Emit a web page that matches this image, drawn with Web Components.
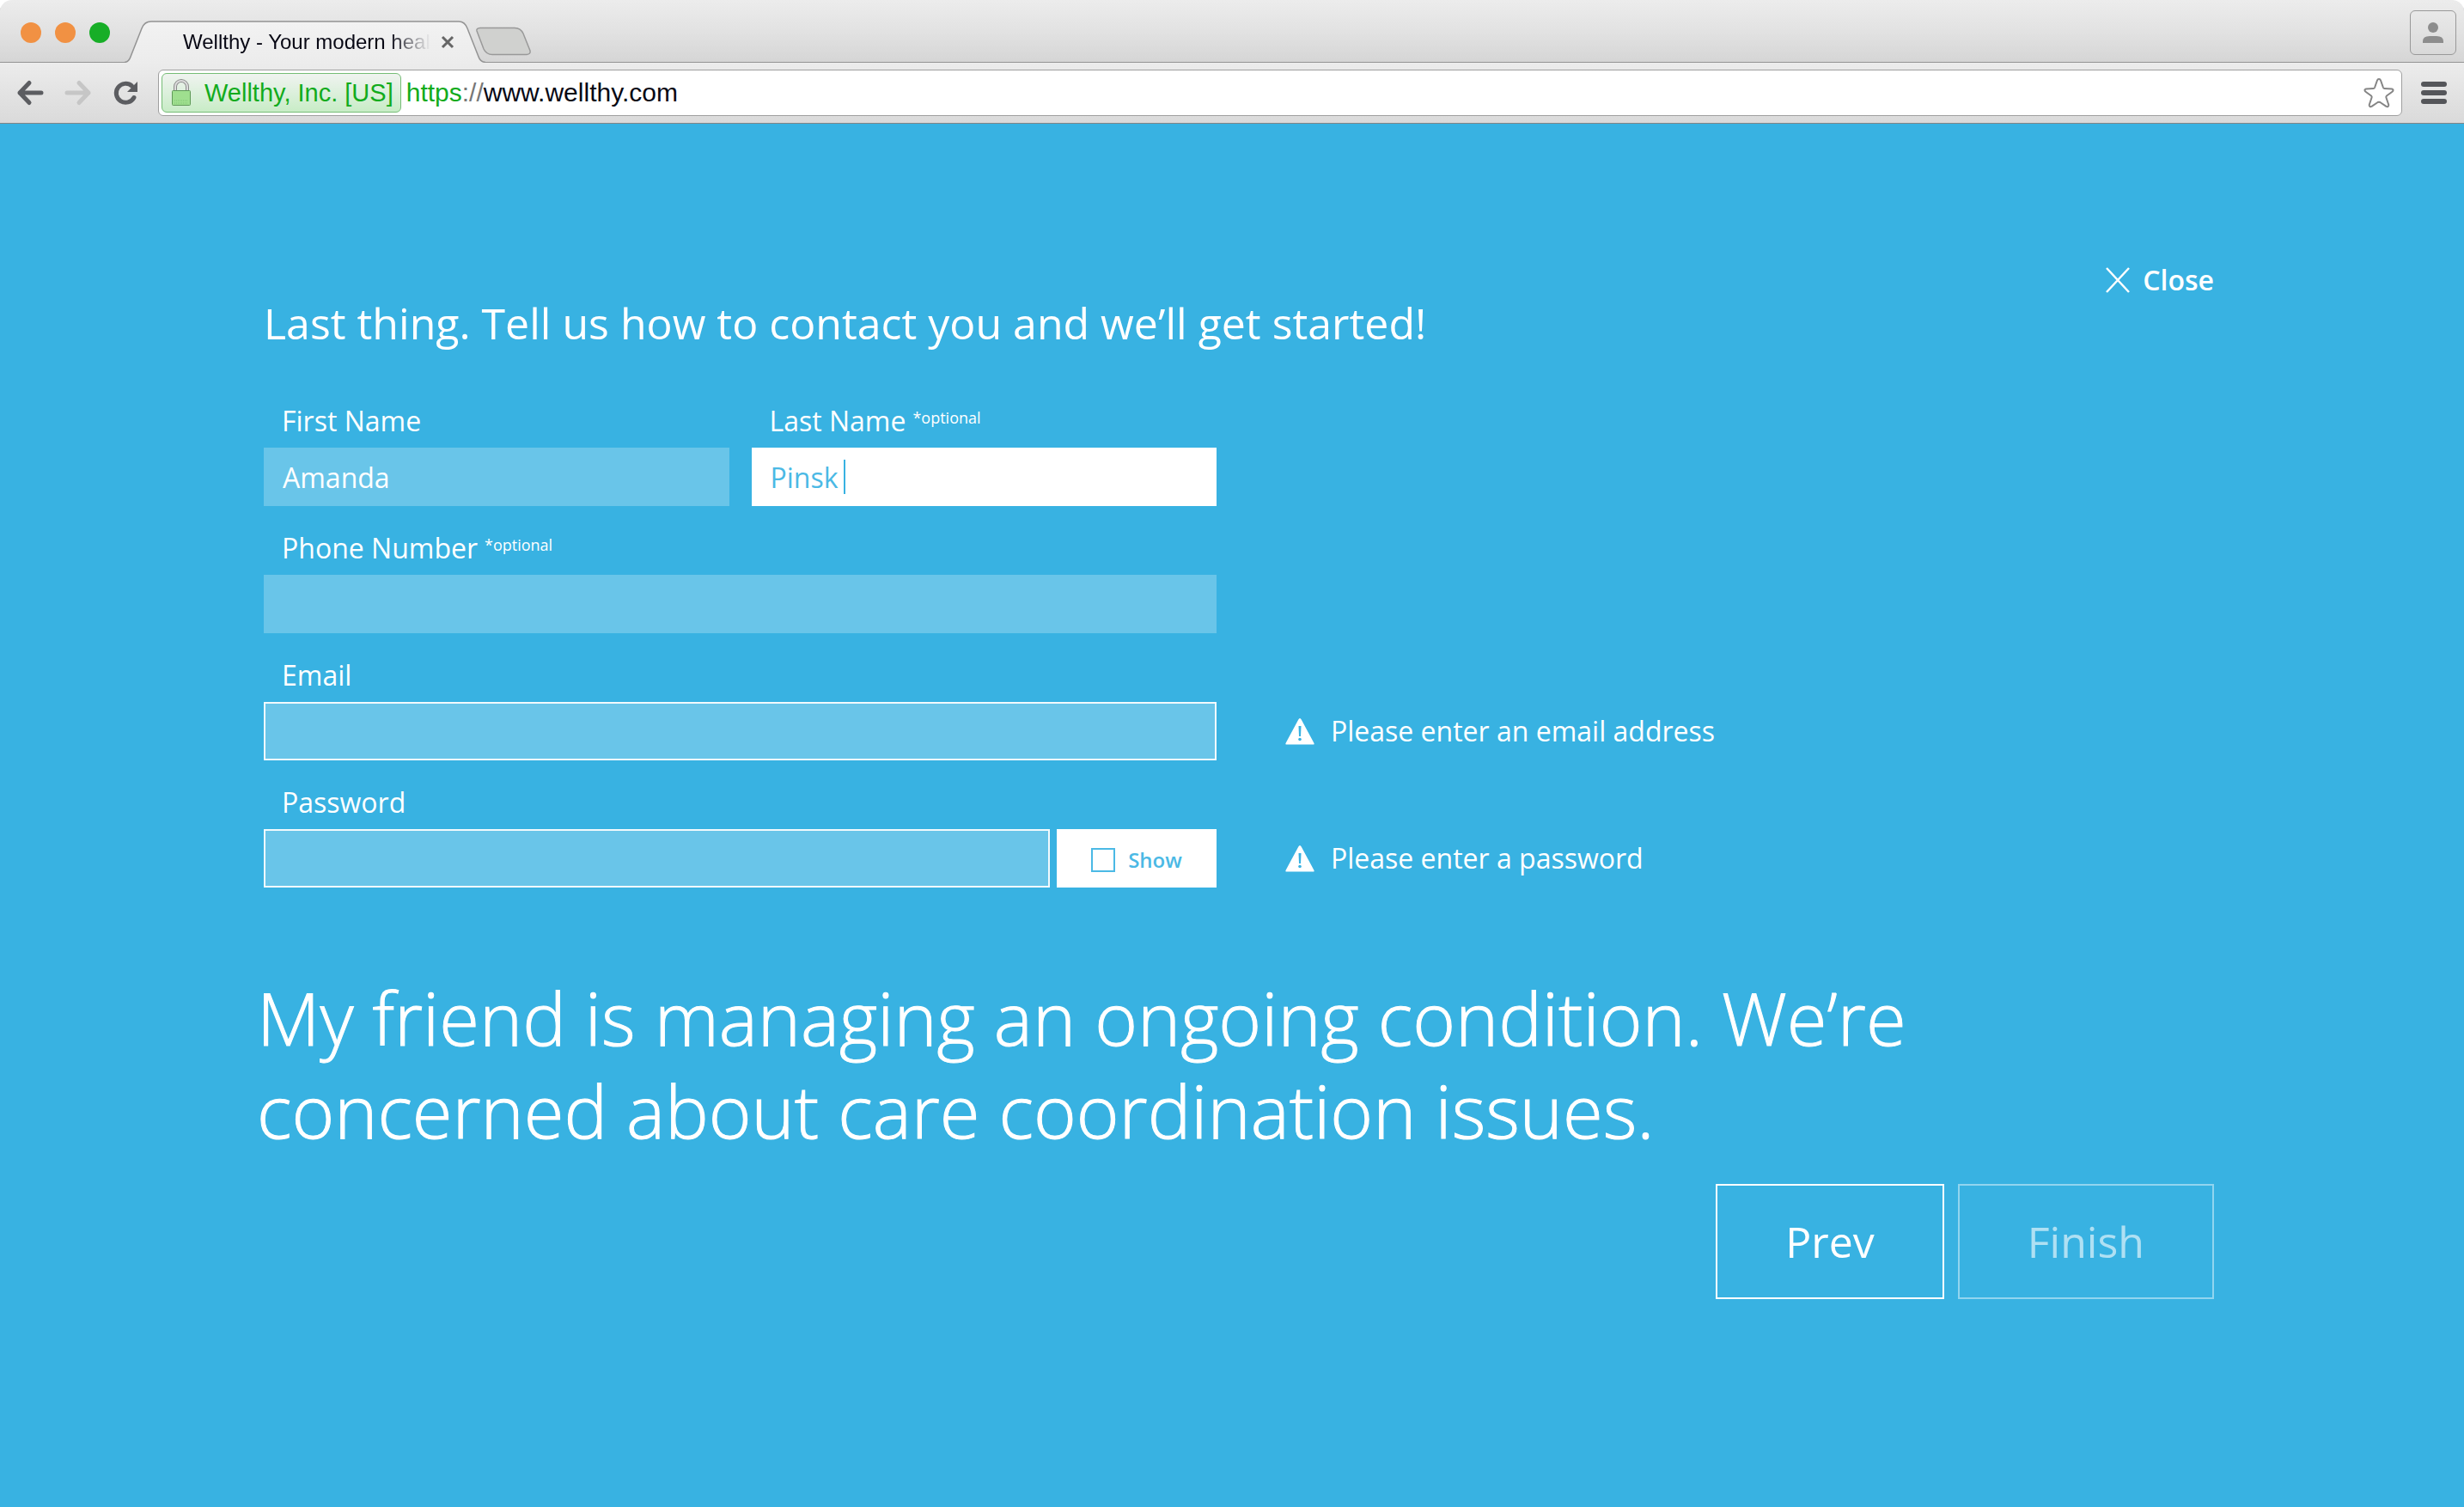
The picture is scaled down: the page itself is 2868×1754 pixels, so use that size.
<!DOCTYPE html>
<html lang="en">
<head>
<meta charset="utf-8">
<title>Wellthy - Your modern health care</title>
<style>
  html, body { margin: 0; }
  body { min-height: 100vh; background: #fff; font-family: "Open Sans", "Noto Sans", sans-serif; }
</style>
</head>
<body>
<browser-window>
  <browser-tab slot="tabs">Wellthy - Your modern health care</browser-tab>
  <address-bar slot="address" owner="Wellthy, Inc. [US]" scheme="https" host="www.wellthy.com"></address-bar>
  <contact-page></contact-page>
</browser-window>

<script>
function define(name, html, setup) {
  const template = document.createElement('template');
  template.innerHTML = html;
  customElements.define(name, class extends HTMLElement {
    constructor() {
      super();
      this.attachShadow({ mode: 'open' }).append(template.content.cloneNode(true));
    }
    connectedCallback() {
      if (setup) setup(this, this.shadowRoot);
    }
  });
}

define('browser-tab', `
<style>
  :host { display: grid; width: 420px; height: 49px; font-family: "Liberation Sans", Arial, sans-serif; }
  .shape, .body { grid-area: 1 / 1; }
  .body { display: flex; align-items: center; padding: 0 36px 0 68px; gap: 12px; min-width: 0; }
  .title { flex: 1; min-width: 0; overflow: hidden; white-space: nowrap; font-size: 24px; line-height: 30px; color: #080814;
    -webkit-mask-image: linear-gradient(90deg, #000 83%, transparent 100%); mask-image: linear-gradient(90deg, #000 83%, transparent 100%); }
  button { all: unset; display: flex; }
</style>
<svg class="shape" width="420" height="49" viewBox="0 0 420 49" aria-hidden="true">
  <defs><linearGradient id="g" x1="0" y1="0" x2="0" y2="1"><stop offset="0" stop-color="#f2f2f2"/><stop offset="1" stop-color="#ececec"/></linearGradient></defs>
  <path d="M0 49 Q5 48 7 42 L20 9 Q23 1 31 1 H389 Q396 1 399 9 L412 42 Q414 48 420 49 Z" fill="url(#g)"/>
  <path d="M0 48.5 Q5 48 7 42 L20 9 Q23 1 31 1 H389 Q396 1 399 9 L412 42 Q414 48 420 48.5" fill="none" stroke="#939393" stroke-width="1.5"/>
</svg>
<div class="body">
  <span class="title"><slot></slot></span>
  <button aria-label="Close tab"><svg width="16" height="16" viewBox="0 0 16 16"><path d="M2 2 L14 14 M14 2 L2 14" stroke="#666" stroke-width="3"/></svg></button>
</div>`);

define('address-bar', `
<style>
  :host { display: flex; align-items: center; box-sizing: border-box; height: 54px; padding: 0 8px 0 3px; background: #fff;
    border: 1px solid #9f9f9f; border-radius: 6px; font-family: "Liberation Sans", Arial, sans-serif; font-size: 30px; line-height: 40px; }
  button { all: unset; box-sizing: border-box; display: flex; align-items: center; }
  .owner { height: 46px; padding: 0 8px 0 10px; gap: 15px; color: #12ab1c; font-size: 29px; white-space: nowrap;
    border: 1px solid #76bd76; border-radius: 6px; background: linear-gradient(#f0f3f0, #dcf0dc 50%, #c8ecc6); }
  .url { flex: 1; padding-left: 6px; outline: none; white-space: nowrap; color: #080814; }
  .scheme { color: #12ab1c; }
  .sep { color: #777; }
</style>
<button class="owner">
  <svg width="24" height="32" viewBox="0 0 24 32" aria-hidden="true">
    <path d="M5 14 V9 a7 7 0 0 1 14 0 V14" fill="none" stroke="#8b8b8b" stroke-width="4"/>
    <path d="M5 14 V9 a7 7 0 0 1 14 0 V14" fill="none" stroke="#dcdcdc" stroke-width="2"/>
    <rect x="1.500" y="13.500" width="21" height="17" rx="1" fill="#9fdf8f" stroke="#5f9a58"/>
    <path d="M4 25 H20 M4 28 H20" stroke="#7fc573" stroke-width="1" stroke-dasharray="1 1"/>
  </svg>
  <span class="name"></span>
</button>
<div class="url" role="textbox" aria-label="Address" contenteditable="true" spellcheck="false"><span class="scheme"></span><span class="sep">://</span><span class="host"></span></div>
<button aria-label="Bookmark this page">
  <svg width="36" height="36" viewBox="0 0 36 36"><path d="M18 2 Q19.500 2 20 3.500 L23 12 Q23.400 13 24.500 13 L33 13.500 Q34.800 14 34.500 15 Q34.500 16 33.500 16.700 L27 21.500 Q26 22.300 26.400 23.500 L29.300 32 Q29.500 33.500 28.500 34 Q27.500 34.500 26.500 33.800 L19.300 29 Q18 28.300 16.700 29 L9.500 33.800 Q8.500 34.500 7.500 34 Q6.500 33.500 6.700 32 L9.600 23.500 Q10 22.300 9 21.500 L2.500 16.700 Q1.500 16 1.500 15 Q1.200 14 3 13.500 L11.500 13 Q12.600 13 13 12 L16 3.500 Q16.500 2 18 2 Z" fill="#fff" stroke="#858585" stroke-width="2" stroke-linejoin="round"/></svg>
</button>`, (host, root) => {
  root.querySelector('.name').textContent = host.getAttribute('owner');
  root.querySelector('.scheme').textContent = host.getAttribute('scheme');
  root.querySelector('.host').textContent = host.getAttribute('host');
});

define('browser-window', `
<style>
  :host { display: flex; flex-direction: column; min-height: 100vh; }
  button { all: unset; display: flex; }
  .strip { display: flex; align-items: flex-end; height: 73px; background: linear-gradient(#ececec, #e2e2e2 50%, #d5d5d5); border-radius: 14px 14px 0 0;
    box-shadow: inset 0 -1px #939393; }
  .lights { display: flex; gap: 16px; padding: 0 17px 23px 24px; }
  .lights button { width: 24px; height: 24px; border-radius: 50%; background: #f19143; }
  .lights .zoom { background: #17ae27; }
  .new { padding-bottom: 8px; margin-left: -12px; }
  .profile { box-sizing: border-box; width: 54px; height: 52px; margin: 0 9px 9px auto; border: 1px solid #999; border-radius: 6px; align-items: center; justify-content: center; }
  .bar { display: flex; align-items: center; box-sizing: border-box; height: 71px; padding: 0 20px 0 19px; border-bottom: 1px solid #858585; background: linear-gradient(#ececec, #dadada); }
  .nav { display: flex; gap: 24px; padding-right: 21px; }
  ::slotted([slot=address]) { flex: 1; margin-right: 22px; }
  main { flex: 1; display: flex; flex-direction: column; }
</style>
<div class="strip">
  <div class="lights"><button aria-label="Close"></button><button aria-label="Minimize"></button><button class="zoom" aria-label="Zoom"></button></div>
  <slot name="tabs"></slot>
  <button class="new" aria-label="New tab"><svg width="66" height="34" viewBox="0 0 66 34"><path d="M6 1.500 H46 Q53 1.500 56 8 L64 28 Q65 32 60 32.500 H20 Q13 32.500 10 26 L2 5 Q1 2 6 1.500 Z" fill="#d0d1cf" stroke="#999" stroke-width="1.500"/></svg></button>
  <button class="profile" aria-label="Profile"><svg width="26" height="26" viewBox="0 0 26 26"><circle cx="13" cy="7" r="6" fill="#8d8d8d"/><path d="M1 25 V23 Q1 17 9 17 H17 Q25 17 25 23 V25 Z" fill="#8d8d8d"/></svg></button>
</div>
<div class="bar">
  <div class="nav">
    <button aria-label="Back"><svg width="32" height="32" viewBox="0 0 32 32"><path d="M15 4.500 L4 16 L15 27.500 M4 16 H29" fill="none" stroke="#5c5d61" stroke-width="5" stroke-linecap="round" stroke-linejoin="round"/></svg></button>
    <button aria-label="Forward"><svg width="32" height="32" viewBox="0 0 32 32"><path d="M17 4.500 L28 16 L17 27.500 M28 16 H3" fill="none" stroke="#c6c6c6" stroke-width="5" stroke-linecap="round" stroke-linejoin="round"/></svg></button>
    <button aria-label="Reload"><svg width="32" height="32" viewBox="0 0 32 32"><path d="M25 21.500 A11 11 0 1 1 22.500 8" fill="none" stroke="#5c5d61" stroke-width="5" stroke-linecap="round"/><path d="M29 3 V15 H17 Z" fill="#5c5d61"/></svg></button>
  </div>
  <slot name="address"></slot>
  <button aria-label="Menu"><svg width="30" height="26" viewBox="0 0 30 26"><g fill="#55565a"><rect width="30" height="6" rx="3"/><rect y="10" width="30" height="6" rx="3"/><rect y="20" width="30" height="6" rx="3"/></g></svg></button>
</div>
<main><slot></slot></main>`);

define('text-field', `
<style>
  :host { display: block; min-width: 0; font-size: 32px; line-height: 40px; }
  label { display: flex; height: 40px; padding-left: 21px; margin-bottom: 11px; white-space: nowrap; }
  .note { font-size: 18px; line-height: 24px; padding: 4px 0 0 8px; }
  .row { display: flex; gap: 8px; }
  .box { flex: 1; min-width: 0; box-sizing: border-box; display: flex; align-items: center; height: 68px; padding: 0 20px; background: #69c5e9; border: 2px solid transparent; border-width: 0 2px; }
  :host([invalid]) .box { border: 2px solid #f2fafd; }
  input { all: unset; flex: 1; min-width: 0; font: inherit; color: inherit; height: 48px; }
  .caret { display: none; width: 2px; height: 40px; margin-left: 6px; background: #38b2e2; }
  :host([active]) .box { background: #fff; border-color: #fff; color: #4bb9e5; }
  :host([active]) input { flex: none; field-sizing: content; }
  :host([active]) .caret { display: block; }
</style>
<label for="field"><span class="label"></span><span class="note" hidden></span></label>
<div class="row"><div class="box"><input id="field"><span class="caret"></span></div><slot></slot></div>`, (host, root) => {
  root.querySelector('.label').textContent = host.getAttribute('label');
  const note = root.querySelector('.note');
  note.textContent = host.getAttribute('note') || '';
  note.hidden = !note.textContent;
  const input = root.querySelector('input');
  input.type = host.getAttribute('type') || 'text';
  input.value = host.getAttribute('value') || '';
});

define('show-toggle', `
<style>
  :host { display: flex; width: 186px; }
  label { flex: 1; display: flex; align-items: center; justify-content: center; gap: 15px; background: #fff; color: #4bb9e5; font-size: 24px; font-weight: 600; line-height: 32px; padding-top: 4px; }
  input { appearance: none; box-sizing: border-box; width: 28px; height: 28px; margin: 0; border: 2px solid #4bb9e5; background: #fff; }
</style>
<label><input type="checkbox"><span><slot></slot></span></label>`);

define('alert-message', `
<style>
  :host { display: flex; align-items: center; gap: 19px; height: 68px; font-size: 32px; line-height: 40px; white-space: nowrap; }
  svg { flex: none; }
</style>
<svg width="34" height="32" viewBox="0 0 34 32" aria-hidden="true"><path d="M17 1 Q18 1 18.700 2.500 L33.500 30 Q34 31.500 32.500 31.500 H1.500 Q0 31.500 .5 30 L15.300 2.500 Q16 1 17 1 Z" fill="#fff"/><path d="M15.500 10 H18.500 L18 22 H16 Z" fill="#38b2e2"/><circle cx="17" cy="25.500" r="1.800" fill="#38b2e2"/></svg>
<span role="alert"><slot></slot></span>`);

define('action-button', `
<style>
  :host { display: block; }
  button { all: unset; box-sizing: border-box; display: block; height: 134px; padding: 0 79px; border: 2px solid #fff; color: #fff; font-size: 50px; line-height: 130px; text-align: center; }
  button:disabled { border-color: rgba(255,255,255,.45); color: rgba(255,255,255,.6); }
</style>
<button type="button"><slot></slot></button>`, (host, root) => {
  root.querySelector('button').disabled = host.hasAttribute('disabled');
});

define('contact-page', `
<style>
  :host { flex: 1; display: flex; flex-direction: column; padding: 162px 291px 160px 299px; background: #38b2e2; color: #fff; }
  header, form { padding-left: 8px; }
  header { display: flex; justify-content: space-between; align-items: flex-start; }
  h1 { margin: 38px 0 0; font-size: 50px; line-height: 64px; font-weight: 400; }
  .close { all: unset; display: flex; align-items: center; gap: 15px; font-size: 32px; line-height: 40px; font-weight: 600; }
  form { display: grid; grid-template-columns: minmax(0, 1109px) auto; justify-content: start; column-gap: 80px; row-gap: 29px; margin-top: 62px; align-items: end; }
  .names { display: grid; grid-template-columns: 1fr 1fr; gap: 26px; }
  text-field, .names { grid-column: 1; }
  .names text-field { grid-column: auto; }
  .summary { margin: 97px 0 32px; font-size: 85px; line-height: 108px; font-weight: 300; -webkit-text-stroke: 1px #fff; }
  .actions { display: flex; justify-content: flex-end; gap: 16px; }
</style>
<header>
  <h1>Last thing. Tell us how to contact you and we’ll get started!</h1>
  <button class="close"><svg width="28" height="30" viewBox="0 0 28 30" aria-hidden="true"><path d="M1 1 L27 29 M27 1 L1 29" stroke="#fff" stroke-width="2.500"/></svg>Close</button>
</header>
<form>
  <div class="names">
    <text-field label="First Name" value="Amanda"></text-field>
    <text-field label="Last Name" note="*optional" value="Pinsk" active></text-field>
  </div>
  <text-field label="Phone Number" note="*optional" type="tel"></text-field>
  <text-field label="Email" type="email" invalid></text-field>
  <alert-message>Please enter an email address</alert-message>
  <text-field label="Password" type="password" invalid><show-toggle>Show</show-toggle></text-field>
  <alert-message>Please enter a password</alert-message>
</form>
<p class="summary">My friend is managing an ongoing condition. We’re concerned about care coordination issues.</p>
<div class="actions">
  <action-button>Prev</action-button>
  <action-button disabled>Finish</action-button>
</div>`);
</script>
</body>
</html>
